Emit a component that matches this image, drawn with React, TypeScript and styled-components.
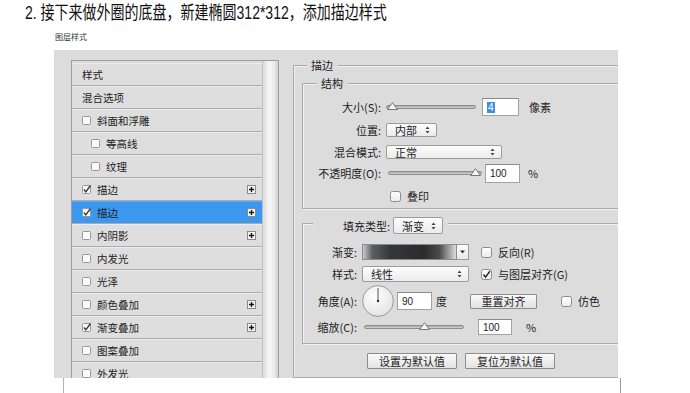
import styled, { createGlobalStyle } from "styled-components"

const GlobalStyle = createGlobalStyle`
  body {
    margin: 0;
    background: #fff;
    font-family: "Noto Sans CJK SC", "Liberation Sans", sans-serif;
    color: #1c1c1c;
  }
`

const Page = styled.div`
  width: 690px;
  height: 393px;
  overflow: hidden;
`

const Heading = styled.div`
  height: 31px;
  padding-left: 25px;
  font-family: "Liberation Sans", "Noto Sans CJK SC", sans-serif;
  font-size: 14px;
  line-height: 16px;
  color: #111;

  span {
    display: inline-block;
    margin-top: 2px;
    transform: scaleY(1.32);
    transform-origin: 0 0;
    white-space: nowrap;
  }
`

const Caption = styled.div`
  height: 12px;
  margin-bottom: 7px;
  padding-left: 55px;
  font-size: 8px;
  line-height: 12px;
  color: #333;
`

const Dialog = styled.div`
  margin-left: 54px;
  width: 564px;
  height: 328px;
  box-sizing: border-box;
  padding: 10px 0 0 17px;
  background: #dcdcdc;
  display: flex;
  gap: 14px;
  overflow: hidden;
  font-size: 11px;
`

const Footer = styled.div`
  margin-left: 63px;
  width: 558px;
  height: 15px;
  box-sizing: border-box;
  border-left: 1px solid #b4b4b4;
  border-right: 1px solid #9c9c9c;
`

/* ---------- left style list ---------- */

const StyleList = styled.div`
  flex-shrink: 0;
  width: 208px;
  height: 340px;
  box-sizing: border-box;
  border: 1px solid #9e9e9e;
  display: flex;
`

const ListRows = styled.div`
  flex: 1;
  padding-top: 2px;
`

const ListRow = styled.div<{ $indent: number; $selected?: boolean }>`
  height: 23px;
  box-sizing: border-box;
  display: flex;
  align-items: center;
  gap: 6px;
  padding: 0 6px 0 ${({ $indent }) => $indent}px;
  background: ${({ $selected }) => ($selected ? "#3b98ee" : "#dedede")};
  border-bottom: 1px solid #acacac;
  box-shadow: inset 0 1px 0 ${({ $selected }) => ($selected ? "#5aaaf2" : "#ececec")};
  font-size: 10.5px;
  white-space: nowrap;
`

const PlusButton = styled.svg`
  margin-left: auto;
  flex-shrink: 0;
`

const ScrollBar = styled.div`
  width: 15px;
  border-left: 1px solid #c2c2c2;
  background: linear-gradient(to right, #dcdcdc, #f8f8f8 45%, #e6e6e6 80%, #cfcfcf);
`

/* ---------- group boxes ---------- */

const GroupBox = styled.div<{ $w?: number; $top: number; $padTop: number; $padBottom?: number }>`
  position: relative;
  flex-shrink: 0;
  width: ${({ $w }) => ($w ? $w + "px" : "auto")};
  margin-top: ${({ $top }) => $top}px;
  padding: ${({ $padTop }) => $padTop}px 0 ${({ $padBottom }) => $padBottom ?? 0}px 8px;
  border: 1px solid #a9a9a9;
  box-shadow: inset 1px 1px 0 #f2f2f2, 1px 1px 0 #f2f2f2;
`

const InnerGroup = styled(GroupBox)`
  padding-left: 0;
`

const Legend = styled.div<{ $left: number; $top?: number; $padLeft?: number }>`
  position: absolute;
  top: ${({ $top }) => $top ?? -8}px;
  left: ${({ $left }) => $left}px;
  display: flex;
  align-items: center;
  gap: 3px;
  padding: 0 5px 0 ${({ $padLeft }) => $padLeft ?? 4}px;
  background: #dcdcdc;
  line-height: 14px;
  font-size: 11px;
`

const FieldRow = styled.div<{ $label: number; $h: number }>`
  display: grid;
  grid-template-columns: ${({ $label }) => $label}px auto;
  column-gap: 5px;
  align-items: center;
  height: ${({ $h }) => $h}px;
  white-space: nowrap;
`

const Label = styled.span`
  text-align: right;
`

const Controls = styled.div<{ $gap?: number }>`
  display: flex;
  align-items: center;
  gap: ${({ $gap }) => $gap ?? 6}px;
`

const Spaced = styled.span<{ $ml: number }>`
  margin-left: ${({ $ml }) => $ml}px;
  display: inline-flex;
  align-items: center;
  gap: 6px;
`

/* ---------- controls ---------- */

const SliderTrack = styled.div<{ $w: number; $ml?: number }>`
  position: relative;
  width: ${({ $w }) => $w}px;
  height: 4px;
  margin-left: ${({ $ml }) => $ml ?? 0}px;
  box-sizing: border-box;
  border: 1px solid #8e8e8e;
  border-radius: 3px;
  background: linear-gradient(#a4a4a4, #d6d6d6);
`

const SliderThumb = styled.svg<{ $pos: number }>`
  position: absolute;
  top: -4px;
  left: calc((100% - 11px) * ${({ $pos }) => $pos / 100});
`

const TextBox = styled.div<{ $w: number; $h: number }>`
  width: ${({ $w }) => $w}px;
  height: ${({ $h }) => $h}px;
  box-sizing: border-box;
  padding-left: 4px;
  border: 1px solid #a2a2a2;
  border-top-color: #8a8a8a;
  background: #fff;
  display: flex;
  align-items: center;
  font-family: "Liberation Sans", sans-serif;
  font-size: 10px;
`

const Selected = styled.span`
  background: #3a8ee6;
  color: #fff;
  padding: 0 1px;
`

const Select = styled.div<{ $w: number; $h: number }>`
  width: ${({ $w }) => $w}px;
  height: ${({ $h }) => $h}px;
  box-sizing: border-box;
  display: flex;
  align-items: center;
  justify-content: space-between;
  padding: 0 6px 0 8px;
  border: 1px solid #9c9c9c;
  border-radius: 2px;
  background: linear-gradient(#fdfdfd, #ebebeb);
`

const GradientPicker = styled.div`
  display: flex;
  height: 16px;
`

const GradientSwatch = styled.div`
  width: 95px;
  box-sizing: border-box;
  border: 1px solid #8a8a8a;
  background: linear-gradient(
    to right,
    #c3caca 0%,
    #5c5f60 10%,
    #35363a 30%,
    #2c2c2c 65%,
    #4a4a4a 82%,
    #dcdcdc 100%
  );
`

const ArrowButton = styled.div`
  width: 12px;
  box-sizing: border-box;
  display: flex;
  align-items: center;
  justify-content: center;
  border: 1px solid #9c9c9c;
  border-left: none;
  background: linear-gradient(#fdfdfd, #e8e8e8);
`

const Button = styled.div<{ $w: number; $h: number }>`
  width: ${({ $w }) => $w}px;
  height: ${({ $h }) => $h}px;
  box-sizing: border-box;
  display: flex;
  align-items: center;
  justify-content: center;
  border: 1px solid #8c8c8c;
  border-radius: 1px;
  background: linear-gradient(#fafafa, #e2e2e2);
  font-size: 11px;
`

const ButtonBar = styled.div`
  display: flex;
  gap: 8px;
  margin: 9px 0 0 65px;
`

const Dial = styled.svg`
  flex-shrink: 0;
`

/* ---------- small drawings ---------- */

function SmallCheck({ on }: { on?: boolean }) {
  return (
    <svg width="9" height="9" viewBox="0 0 9 9" style={{ flexShrink: 0, overflow: "visible" }}>
      <rect x="0.5" y="0.5" width="8" height="8" rx="1" fill="#fafafa" stroke="#979797" />
      {on && <path d="M2 4.5 L3.8 7 L8.5 0.5" fill="none" stroke="#333" strokeWidth="1.3" />}
    </svg>
  )
}

function CheckBox({ on }: { on?: boolean }) {
  return (
    <svg width="11" height="11" viewBox="0 0 11 11" style={{ flexShrink: 0, overflow: "visible" }}>
      <defs>
        <linearGradient id="cbg" x1="0" y1="0" x2="0" y2="1">
          <stop offset="0" stopColor="#ffffff" />
          <stop offset="1" stopColor="#ececec" />
        </linearGradient>
      </defs>
      <rect x="0.5" y="0.5" width="10" height="10" rx="2" fill="url(#cbg)" stroke="#8c8c8c" />
      {on && <path d="M2.5 5.5 L4.6 8.2 L9 2" fill="none" stroke="#222" strokeWidth="1.4" />}
    </svg>
  )
}

function Plus() {
  return (
    <PlusButton width="9" height="9" viewBox="0 0 9 9">
      <rect x="0.5" y="0.5" width="8" height="8" fill="#f2f2f2" stroke="#8a8a8a" />
      <path d="M4.5 2 V7 M2 4.5 H7" stroke="#111" strokeWidth="1.3" />
    </PlusButton>
  )
}

function UpDown() {
  return (
    <svg width="5" height="8" viewBox="0 0 5 8">
      <path d="M2.5 0.5 L4.5 3 H0.5 Z M2.5 7.5 L4.5 5 H0.5 Z" fill="#444" />
    </svg>
  )
}

function DownArrow() {
  return (
    <svg width="5" height="4" viewBox="0 0 5 4">
      <path d="M0 0.5 H5 L2.5 3.5 Z" fill="#333" />
    </svg>
  )
}

function Slider({ w, pos, ml }: { w: number; pos: number; ml?: number }) {
  return (
    <SliderTrack $w={w} $ml={ml}>
      <SliderThumb $pos={pos} width="11" height="8" viewBox="0 0 11 8">
        <path d="M5.5 0.7 L10.4 7.5 H0.6 Z" fill="#f6f6f6" stroke="#767676" />
      </SliderThumb>
    </SliderTrack>
  )
}

type ListItem = { text: string; check?: "on" | "off"; indent?: boolean; plus?: boolean; selected?: boolean }

const items: ListItem[] = [
  { text: "样式" },
  { text: "混合选项" },
  { text: "斜面和浮雕", check: "off" },
  { text: "等高线", check: "off", indent: true },
  { text: "纹理", check: "off", indent: true },
  { text: "描边", check: "on", plus: true },
  { text: "描边", check: "on", plus: true, selected: true },
  { text: "内阴影", check: "off", plus: true },
  { text: "内发光", check: "off" },
  { text: "光泽", check: "off" },
  { text: "颜色叠加", check: "off", plus: true },
  { text: "渐变叠加", check: "on", plus: true },
  { text: "图案叠加", check: "off" },
  { text: "外发光", check: "off" },
]

export default function App() {
  return (
    <Page>
      <GlobalStyle />
      <Heading>
        <span>2. 接下来做外圈的底盘，新建椭圆312*312，添加描边样式</span>
      </Heading>
      <Caption>图层样式</Caption>

      <Dialog>
        <StyleList>
          <ListRows>
            {items.map((item, i) => (
              <ListRow key={i} $indent={item.indent ? 19 : 10} $selected={item.selected}>
                {item.check && <SmallCheck on={item.check === "on"} />}
                <span>{item.text}</span>
                {item.plus && <Plus />}
              </ListRow>
            ))}
          </ListRows>
          <ScrollBar />
        </StyleList>

        <GroupBox $w={380} $top={5} $padTop={17}>
          <Legend $left={13}>描边</Legend>

          <InnerGroup $top={0} $padTop={12}>
            <Legend $left={14}>结构</Legend>

            <FieldRow $label={78} $h={22}>
              <Label>大小(S):</Label>
              <Controls>
                <Slider w={90} pos={0} />
                <TextBox $w={37} $h={18}>
                  <Selected>4</Selected>
                </TextBox>
                <Spaced $ml={4}>像素</Spaced>
              </Controls>
            </FieldRow>

            <FieldRow $label={78} $h={24}>
              <Label>位置:</Label>
              <Controls>
                <Select $w={51} $h={14}>
                  内部
                  <UpDown />
                </Select>
              </Controls>
            </FieldRow>

            <FieldRow $label={78} $h={20}>
              <Label>混合模式:</Label>
              <Controls>
                <Select $w={116} $h={14}>
                  正常
                  <UpDown />
                </Select>
              </Controls>
            </FieldRow>

            <FieldRow $label={78} $h={22}>
              <Label>不透明度(O):</Label>
              <Controls $gap={3}>
                <Slider w={94} pos={100} ml={2} />
                <TextBox $w={35} $h={19}>100</TextBox>
                <Spaced $ml={5}>%</Spaced>
              </Controls>
            </FieldRow>

            <FieldRow $label={78} $h={24}>
              <span />
              <Controls>
                <Spaced $ml={4}>
                  <CheckBox />
                  叠印
                </Spaced>
              </Controls>
            </FieldRow>
          </InnerGroup>

          <InnerGroup $top={14} $padTop={17} $padBottom={4}>
            <Legend $left={10} $top={-7} $padLeft={30}>
              填充类型:
              <Select $w={50} $h={17}>
                渐变
                <UpDown />
              </Select>
            </Legend>

            <FieldRow $label={54} $h={22}>
              <Label>渐变:</Label>
              <Controls $gap={12}>
                <GradientPicker>
                  <GradientSwatch />
                  <ArrowButton>
                    <DownArrow />
                  </ArrowButton>
                </GradientPicker>
                <Spaced $ml={0}>
                  <CheckBox />
                  反向(R)
                </Spaced>
              </Controls>
            </FieldRow>

            <FieldRow $label={54} $h={22}>
              <Label>样式:</Label>
              <Controls $gap={12}>
                <Select $w={107} $h={16}>
                  线性
                  <UpDown />
                </Select>
                <Spaced $ml={0}>
                  <CheckBox on />
                  与图层对齐(G)
                </Spaced>
              </Controls>
            </FieldRow>

            <FieldRow $label={54} $h={30}>
              <Label>角度(A):</Label>
              <Controls $gap={3}>
                <Dial width="32" height="32" viewBox="0 0 32 32">
                  <defs>
                    <radialGradient id="dialBg" cx="0.4" cy="0.35" r="0.7">
                      <stop offset="0" stopColor="#ffffff" />
                      <stop offset="1" stopColor="#e2e2e2" />
                    </radialGradient>
                  </defs>
                  <circle cx="16" cy="16" r="15.4" fill="url(#dialBg)" stroke="#9a9a9a" />
                  <path d="M16 16 V3" stroke="#555" strokeWidth="1" />
                  <circle cx="16" cy="16" r="1.2" fill="#333" />
                </Dial>
                <TextBox $w={35} $h={18}>90</TextBox>
                <Spaced $ml={1}>度</Spaced>
                <Spaced $ml={20}>
                  <Button $w={67} $h={15}>重置对齐</Button>
                </Spaced>
                <Spaced $ml={21}>
                  <CheckBox />
                  仿色
                </Spaced>
              </Controls>
            </FieldRow>

            <FieldRow $label={54} $h={24}>
              <Label>缩放(C):</Label>
              <Controls $gap={14}>
                <Slider w={100} pos={62} ml={2} />
                <TextBox $w={34} $h={16}>100</TextBox>
                <span>%</span>
              </Controls>
            </FieldRow>
          </InnerGroup>

          <ButtonBar>
            <Button $w={90} $h={16}>设置为默认值</Button>
            <Button $w={90} $h={16}>复位为默认值</Button>
          </ButtonBar>
        </GroupBox>
      </Dialog>
      <Footer />
    </Page>
  )
}
